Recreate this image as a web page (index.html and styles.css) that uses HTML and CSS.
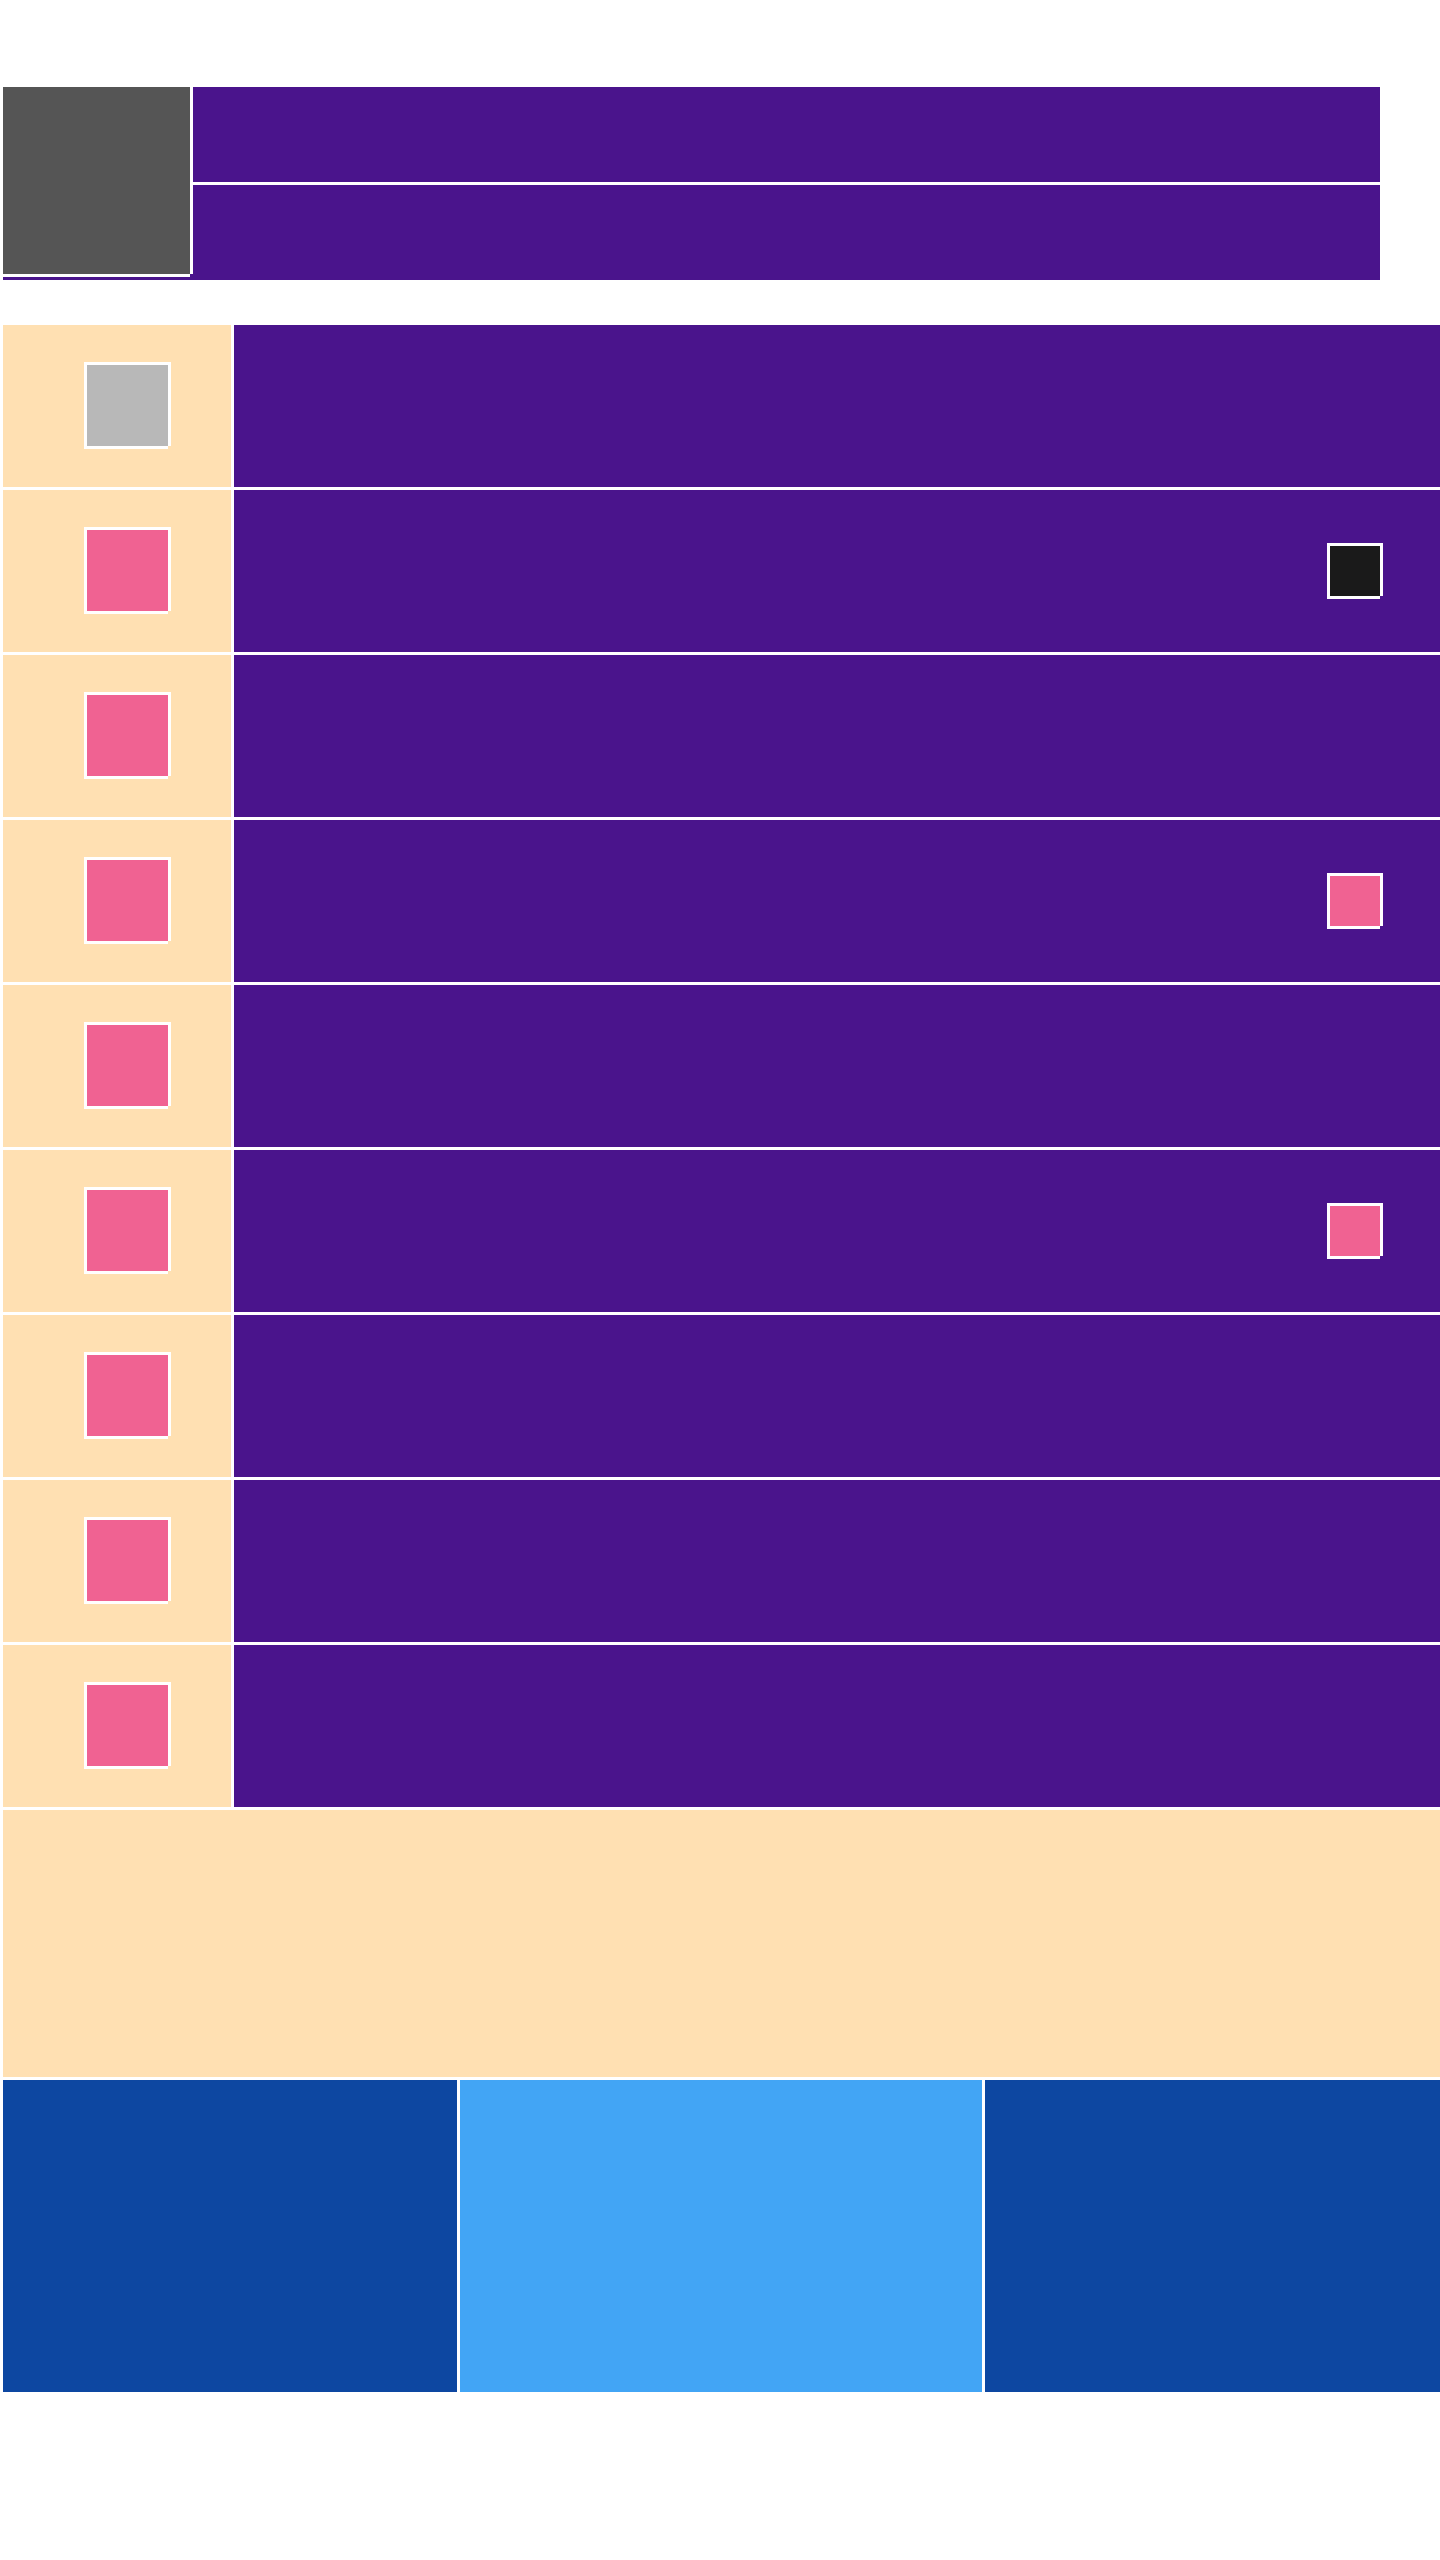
FILE: index.html
```html
<!DOCTYPE html>
<html lang="en">
<head>
<meta charset="utf-8">
<title>Layout</title>
<link rel="stylesheet" href="styles.css">
</head>
<body>
<div class="page">
  <header class="head">
    <div class="tile"></div>
    <div class="head-rows">
      <div class="head-row"></div>
      <div class="head-row"></div>
    </div>
  </header>

  <section class="list">
    <div class="row"><div class="row-left"><span class="check check-gray"></span></div><div class="row-main"></div></div>
    <div class="row"><div class="row-left"><span class="check"></span></div><div class="row-main"><span class="mark mark-dark"></span></div></div>
    <div class="row"><div class="row-left"><span class="check"></span></div><div class="row-main"></div></div>
    <div class="row"><div class="row-left"><span class="check"></span></div><div class="row-main"><span class="mark"></span></div></div>
    <div class="row"><div class="row-left"><span class="check"></span></div><div class="row-main"></div></div>
    <div class="row"><div class="row-left"><span class="check"></span></div><div class="row-main"><span class="mark"></span></div></div>
    <div class="row"><div class="row-left"><span class="check"></span></div><div class="row-main"></div></div>
    <div class="row"><div class="row-left"><span class="check"></span></div><div class="row-main"></div></div>
    <div class="row"><div class="row-left"><span class="check"></span></div><div class="row-main"></div></div>
  </section>

  <section class="summary"></section>

  <section class="tiles">
    <div class="tile-dark"></div>
    <div class="tile-light"></div>
    <div class="tile-dark"></div>
  </section>
</div>
</body>
</html>
```

FILE: styles.css
```css
html, body {
  margin: 0;
  padding: 0;
  background: #ffffff;
  font-family: "Liberation Sans", Arial, sans-serif;
}

.page {
  padding: 87px 0 0 3px;
}

/* header */
.head {
  display: flex;
  width: 1377px;
  height: 193px;
  background: #4a148c;
}

.tile {
  flex: none;
  width: 187px;
  height: 187px;
  margin-right: 3px;
  background: #555555;
  box-shadow: 3px 0 0 #ffffff, 0 3px 0 #ffffff;
}

.head-rows {
  flex: 1;
  display: flex;
  flex-direction: column;
  gap: 3px;
  background: #ffffff;
}

.head-row {
  flex: 1;
  background: #4a148c;
}

/* list */
.list {
  margin-top: 45px;
  display: flex;
  flex-direction: column;
  gap: 3px;
}

.row {
  display: grid;
  grid-template-columns: 228px 1fr;
  gap: 3px;
  height: 162px;
}

.row-left {
  background: #ffe0b2;
  padding: 40px 0 0 84px;
}

.check {
  display: block;
  width: 81px;
  height: 81px;
  background: #f06292;
  box-shadow: -3px -3px 0 #ffffff, 3px -3px 0 #ffffff, -3px 3px 0 #ffffff, 3px 0 0 #ffffff, 0 3px 0 #ffffff;
}

.check-gray {
  background: #b8b8b8;
}

.row-main {
  background: #4a148c;
  display: flex;
  align-items: center;
  justify-content: flex-end;
  padding-right: 60px;
}

.mark {
  display: block;
  width: 50px;
  height: 50px;
  background: #f06292;
  box-shadow: -3px -3px 0 #ffffff, 3px -3px 0 #ffffff, -3px 3px 0 #ffffff, 3px 0 0 #ffffff, 0 3px 0 #ffffff;
}

.mark-dark {
  background: #1a1a1a;
}

/* summary */
.summary {
  margin-top: 3px;
  height: 267px;
  background: #ffe0b2;
}

/* bottom tiles */
.tiles {
  margin-top: 3px;
  display: grid;
  grid-template-columns: 454px 522px 1fr;
  gap: 3px;
  height: 312px;
}

.tile-dark {
  background: #0d47a1;
}

.tile-light {
  background: #42a5f5;
}
```
